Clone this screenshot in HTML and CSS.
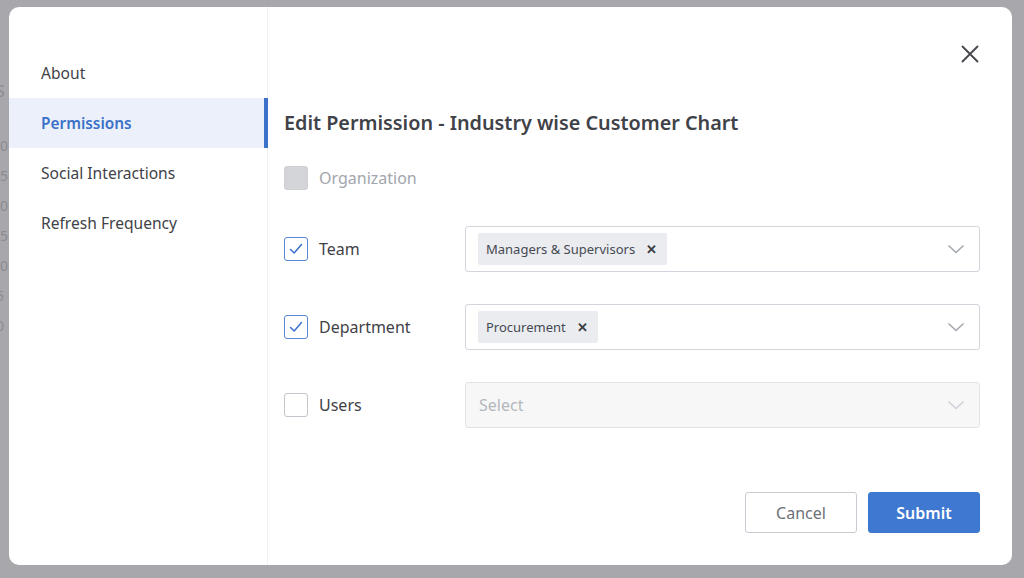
FILE: index.html
```html
<!DOCTYPE html>
<html lang="en">
<head>
<meta charset="utf-8">
<title>Edit Permission</title>
<link rel="stylesheet" href="styles.css">
</head>
<body>
<div class="backdrop">
  <span class="axis axis-s">S</span>
  <div class="axis-labels">
    <span>30</span><span>25</span><span>20</span><span>15</span><span>10</span><span class="one">5</span><span class="one">0</span>
  </div>
</div>
<div class="modal">
  <aside class="sidebar">
    <nav class="nav">
      <a class="nav-item">About</a>
      <a class="nav-item active">Permissions</a>
      <a class="nav-item">Social Interactions</a>
      <a class="nav-item">Refresh Frequency</a>
    </nav>
  </aside>
  <main class="content">
    <div class="header">
      <button class="close" aria-label="Close">
        <svg width="18" height="18" viewBox="0 0 18 18"><path d="M1.5 1.5 L16.5 16.5 M16.5 1.5 L1.5 16.5" stroke="#47494e" stroke-width="1.9" stroke-linecap="round" fill="none"/></svg>
      </button>
    </div>
    <h1 class="title">Edit Permission - Industry wise Customer Chart</h1>
    <div class="form">
      <label class="check-row disabled">
        <span class="box"></span>
        <span class="label">Organization</span>
      </label>
      <div class="spacer"></div>

      <label class="check-row">
        <span class="box checked"><svg width="16" height="16" viewBox="0 0 16 16"><path d="M2.5 8.5 L6.2 12 L13.5 3.5" stroke="#3f75d0" stroke-width="1.6" fill="none" stroke-linecap="round" stroke-linejoin="round"/></svg></span>
        <span class="label">Team</span>
      </label>
      <div class="select">
        <span class="chip">Managers &amp; Supervisors <b class="chip-x">✕</b></span>
        <svg class="chev" width="18" height="10" viewBox="0 0 18 10"><path d="M2 2 L9 8.5 L16 2" stroke="#a6a9b0" stroke-width="1.7" fill="none" stroke-linecap="round" stroke-linejoin="round"/></svg>
      </div>

      <label class="check-row">
        <span class="box checked"><svg width="16" height="16" viewBox="0 0 16 16"><path d="M2.5 8.5 L6.2 12 L13.5 3.5" stroke="#3f75d0" stroke-width="1.6" fill="none" stroke-linecap="round" stroke-linejoin="round"/></svg></span>
        <span class="label">Department</span>
      </label>
      <div class="select">
        <span class="chip">Procurement <b class="chip-x">✕</b></span>
        <svg class="chev" width="18" height="10" viewBox="0 0 18 10"><path d="M2 2 L9 8.5 L16 2" stroke="#a6a9b0" stroke-width="1.7" fill="none" stroke-linecap="round" stroke-linejoin="round"/></svg>
      </div>

      <label class="check-row">
        <span class="box"></span>
        <span class="label">Users</span>
      </label>
      <div class="select empty">
        <span class="placeholder">Select</span>
        <svg class="chev" width="18" height="10" viewBox="0 0 18 10"><path d="M2 2 L9 8.5 L16 2" stroke="#d0d2d7" stroke-width="1.7" fill="none" stroke-linecap="round" stroke-linejoin="round"/></svg>
      </div>
    </div>
    <div class="footer">
      <button class="btn btn-cancel">Cancel</button>
      <button class="btn btn-submit">Submit</button>
    </div>
  </main>
</div>
</body>
</html>
```
FILE: styles.css
```css
* { box-sizing: border-box; }
html, body { margin: 0; height: 100%; }
body {
  background: #a8a8ac;
  font-family: "Noto Sans", "Open Sans", sans-serif;
  color: #3f4248;
  padding: 7px 12px 13px 9px;
  position: relative;
  overflow: hidden;
}
.backdrop { position: absolute; left: 0; top: 0; width: 20px; height: 100%; color: #8b8c91; font-size: 14px; }
.axis-s { position: absolute; left: -4px; top: 80px; font-size: 16px; }
.axis-labels { position: absolute; left: -8px; top: 136px; display: flex; flex-direction: column; gap: 11px; line-height: 19px; }
.axis-labels .one { padding-left: 4px; }

.modal {
  position: relative;
  height: 558px;
  background: #fff;
  border-radius: 10px;
  display: flex;
  overflow: hidden;
}
.sidebar {
  width: 259px;
  border-right: 1px solid #eef0f3;
  padding-top: 41px;
  flex: none;
}
.nav { display: flex; flex-direction: column; }
.nav-item {
  height: 50px;
  display: flex;
  align-items: center;
  padding-left: 32px;
  font-size: 15.6px;
  color: #3f4248;
  position: relative;
}
.nav-item.active {
  background: #ebf0fa;
  color: #3b71c9;
  font-weight: 600;
  font-size: 15.4px;
}
.nav-item.active::after {
  content: "";
  position: absolute;
  right: -1px; top: 0; bottom: 0;
  width: 4px;
  background: #3b71c9;
}
.content {
  flex: 1;
  display: flex;
  flex-direction: column;
  padding: 0 32px 32px 16px;
}
.header { display: flex; justify-content: flex-end; padding-top: 38px; }
.close {
  width: 18px; height: 18px; padding: 0; border: 0; background: none; display: block; margin-right: 1px;
}
.close svg { display: block; }
.title {
  margin: 46px 0 0;
  font-size: 19.8px;
  line-height: 28px;
  font-weight: 600;
  color: #3f4248;
}
.form {
  margin-top: 29px;
  display: grid;
  grid-template-columns: 181px 1fr;
  row-gap: 32px;
  align-items: center;
}
.form .check-row.disabled { margin-bottom: 4px; }
.check-row { display: flex; align-items: center; gap: 11px; }
.box {
  width: 24px; height: 24px;
  border: 1px solid #c2c5cc;
  border-radius: 3px;
  display: flex; align-items: center; justify-content: center;
  flex: none;
}
.box.checked { border-color: #5b87d6; }
.disabled .box { background: #d4d5d9; border-color: #cfd0d4; }
.label { font-size: 16px; color: #3f4248; }
.disabled .label { color: #a3a6ad; }
.select {
  height: 46px;
  border: 1px solid #d2d5db;
  border-radius: 3px;
  display: flex;
  align-items: center;
  padding: 0 14px 0 12px;
  background: #fff;
}
.select.empty { background: #f7f7f8; border-color: #e1e3e7; }
.chip {
  height: 32px;
  background: #ebecf0;
  border-radius: 2px;
  display: inline-flex;
  align-items: center;
  padding: 0 10px 0 8px;
  font-size: 13px;
  color: #454a52;
  gap: 11px;
}
.chip-x { font-size: 13px; font-weight: 700; color: #3a3d42; line-height: 1; }
.chev { margin-left: auto; }
.placeholder { font-size: 16px; color: #b4b7bd; margin-left: 1px; }
.footer {
  margin-top: auto;
  display: flex;
  justify-content: flex-end;
  gap: 11px;
}
.btn {
  width: 112px; height: 41px;
  border-radius: 3px;
  font-family: inherit;
  font-size: 16px;
}
.btn-cancel { background: #fff; border: 1px solid #c8cbd1; color: #6d7178; }
.btn-submit { background: #3f78d0; border: 1px solid #3f78d0; color: #fff; font-weight: 600; }
```
